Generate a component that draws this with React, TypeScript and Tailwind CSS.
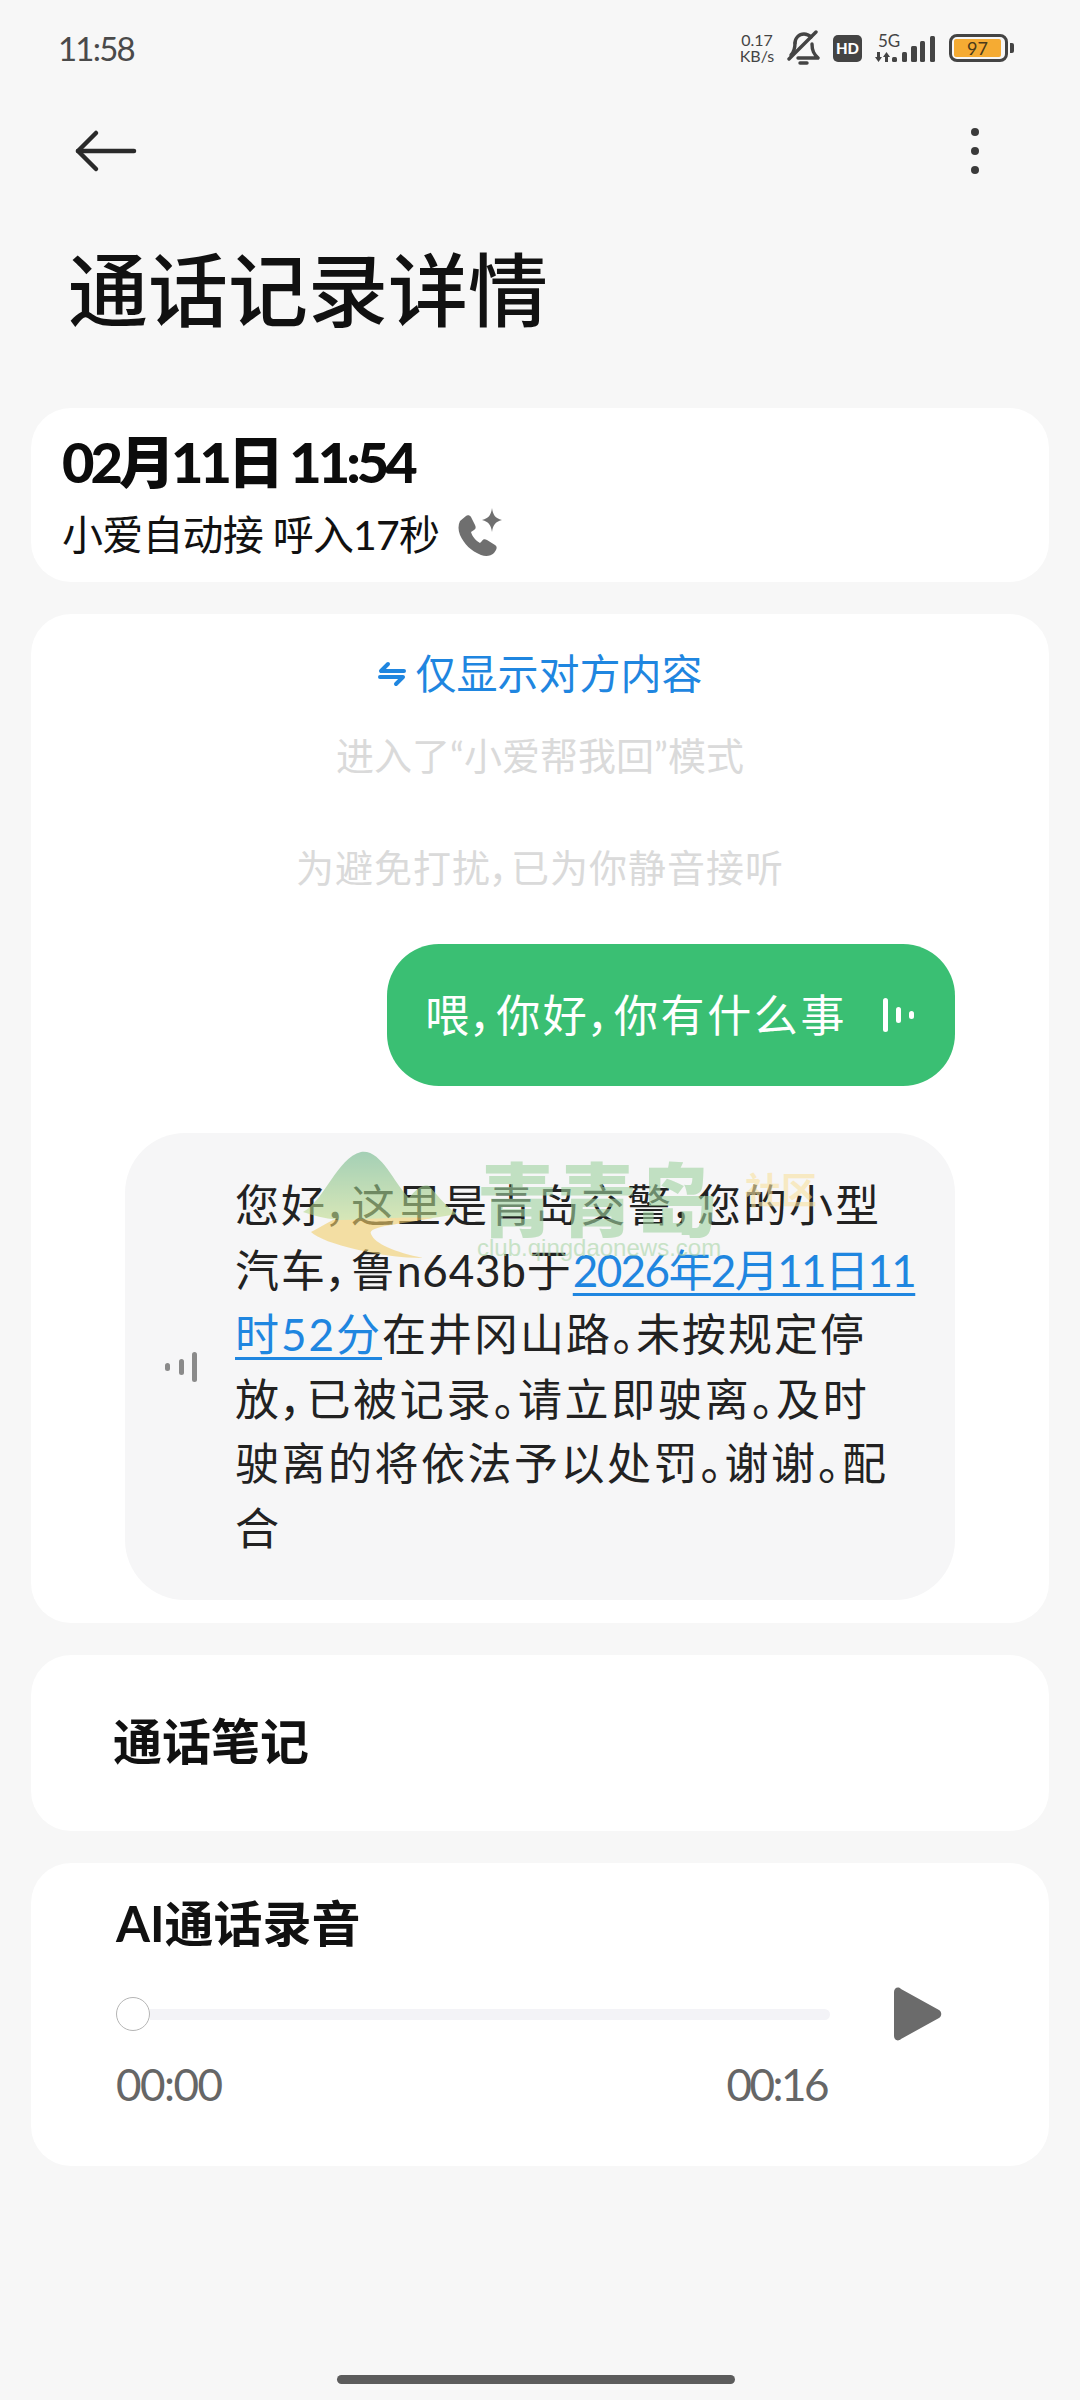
import React from 'react';

const cjk = "font-['Lato','Noto_Sans_CJK_SC',sans-serif] [font-feature-settings:'palt']";
const link = 'text-[#1f86e0] underline decoration-[3px] underline-offset-[6px]';

function StatusBar() {
  return (
    <div className="flex h-[96px] items-center justify-between pl-[58px] pr-[66px]">
      <span className="text-[33px] leading-none tracking-[-1.8px] text-[#4a4a4a]">11:58</span>
      <div className="flex items-center">
        <div className="flex w-[40px] flex-col items-center text-[16px] leading-[16px] text-[#444]">
          <span>0.17</span>
          <span>KB/s</span>
        </div>
        <svg className="ml-[9px]" width="34" height="36" viewBox="0 0 34 36" fill="none" stroke="#444" strokeWidth="3.4" strokeLinecap="round" strokeLinejoin="round">
          <path d="M9 13c0-5 4-9 9-9 3 0 5 1 7 3" />
          <path d="M26 14c0 7 2 10 6 14H12" />
          <path d="M9 13c0 5-1 9-4 12" />
          <path d="M3 29 30 2" />
          <path d="M14 33h7" />
        </svg>
        <div className="ml-[13px] flex h-[27px] w-[29px] items-center justify-center rounded-[5px] bg-[#444] text-[15px] font-black leading-none text-white">HD</div>
        <div className="relative ml-[12px] h-[32px] w-[62px]">
          <svg className="absolute left-0 top-0" width="62" height="32" viewBox="0 0 62 32" fill="#444">
            <path d="M3 20h3v5h2l-3.5 5L1 25h2Z" />
            <path d="M11 30h3v-5h2l-3.5-5L9 25h2Z" />
            <rect x="18" y="25" width="5" height="5" rx="1.5" />
            <rect x="28" y="20" width="5" height="10" rx="1.5" />
            <rect x="37" y="14" width="6" height="16" rx="1.5" />
            <rect x="46" y="9" width="5" height="21" rx="1.5" />
            <rect x="56" y="4" width="5" height="26" rx="1.5" />
          </svg>
          <span className="absolute left-[4px] top-[0px] text-[17px] leading-[17px] text-[#444]">5G</span>
        </div>
        <div className="ml-[13px] flex items-center">
          <div className="h-[28px] w-[59px] rounded-[8px] border-[3px] border-[#444] p-[2px]">
            <div className="flex h-full w-[47px] items-center justify-center rounded-[2px] bg-[#f5ab33] text-[18px] leading-none text-[#4a3a1a]">97</div>
          </div>
          <div className="ml-[2px] h-[10px] w-[4px] rounded-r-[2px] bg-[#444]" />
        </div>
      </div>
    </div>
  );
}

function Bars({ heights, gaps, color }: { heights: number[]; gaps: number[]; color: string }) {
  let x = 0;
  const h = Math.max(...heights);
  return (
    <svg width="34" height={h} viewBox={`0 0 34 ${h}`} fill={color}>
      {heights.map((b, i) => {
        const el = <rect key={i} x={x} y={(h - b) / 2} width="5" height={b} rx="2.5" />;
        x += gaps[i] || 0;
        return el;
      })}
    </svg>
  );
}

function Watermark() {
  return (
    <div className="pointer-events-none absolute left-[45px] top-[17px] h-[110px] w-[660px] opacity-60">
      <svg className="absolute left-[63px] top-0" width="300" height="110" viewBox="0 0 300 110">
        <defs>
          <linearGradient id="mt" x1="0" y1="0" x2="0" y2="1">
            <stop offset="0" stopColor="#6fb78a" />
            <stop offset="1" stopColor="#c5de8e" />
          </linearGradient>
        </defs>
        <path d="M70 62C92 50 104 8 128 2c20-3 32 30 48 46 8-10 14-14 20-12 6 6 14 18 28 28-40 8-110 14-154-2Z" fill="url(#mt)" />
        <path d="M100 70c30 0 70-4 100-2-30 6-66 8-62 16 4 10 24 18 52 24-40 0-100-14-112-26 8-4 14-8 22-12Z" fill="#f2cf6c" />
      </svg>
      <div className="absolute left-[307px] top-[10px] whitespace-nowrap font-['Noto_Sans_CJK_SC',sans-serif] text-[80px] font-black leading-[70px] text-[#9fd2a0]">青青岛</div>
      <div className="absolute left-[575px] top-[20px] whitespace-nowrap font-['Noto_Sans_CJK_SC',sans-serif] text-[36px] font-bold leading-none text-[#f8e2a0]">社区</div>
      <div className="absolute left-[307px] top-[86px] whitespace-nowrap font-['Liberation_Sans',sans-serif] text-[24px] leading-none text-[#a9d5a6]">club.qingdaonews.com</div>
    </div>
  );
}

export default function App() {
  return (
    <div className={`relative h-[2400px] w-[1080px] overflow-hidden bg-[#f7f7f7] ${cjk}`}>
      <StatusBar />

      {/* Header */}
      <div className="flex h-[108px] items-center justify-between pl-[74px] pr-[101px] pt-[2px]">
        <svg width="64" height="44" viewBox="0 0 64 44" fill="none" stroke="#2a2a2a" strokeWidth="4.5" strokeLinecap="round" strokeLinejoin="round">
          <path d="M60 22H4" />
          <path d="M22 4 4 22l18 18" />
        </svg>
        <div className="flex flex-col gap-[11px]">
          <span className="h-[8px] w-[8px] rounded-full bg-[#3a3a3a]" />
          <span className="h-[8px] w-[8px] rounded-full bg-[#3a3a3a]" />
          <span className="h-[8px] w-[8px] rounded-full bg-[#3a3a3a]" />
        </div>
      </div>
      <h1 className="ml-[68px] mt-[35px] text-[80px] font-medium leading-[100px] text-[#111]">通话记录详情</h1>

      <div className="mt-[69px] flex flex-col gap-[32px] px-[31px]">
        {/* Time card */}
        <div className="h-[174px] rounded-[40px] bg-white pl-[31px] pt-[21px]">
          <div className="text-[56px] font-black leading-[66px] tracking-[-4px] text-[#0c0c0c]">02月11日 11:54</div>
          <div className="mt-[12px] flex items-center">
            <span className="text-[41px] leading-[56px] tracking-[-0.8px] text-[#111]">小爱自动接 呼入17秒</span>
            <svg className="ml-[18px] -translate-y-[2px]" width="50" height="50" viewBox="0 0 50 50" fill="#6f6f6f">
              <path d="M3 13c-2 4-2 9 0 14 4 9 11 16 21 20 5 2 10 1 13-2l2-3c1-2 1-4-1-5l-8-5c-2-1-4-1-5 1l-2 2c-4-2-8-7-9-11l3-2c2-1 2-3 1-5l-4-8c-1-2-4-2-5-1Z" />
              <path d="M35 0c1 7 3 10 10 12-7 2-9 5-10 12-1-7-3-10-10-12 7-2 9-5 10-12Z" />
            </svg>
          </div>
        </div>

        {/* Transcript card */}
        <div className="flex h-[1009px] flex-col rounded-[40px] bg-white px-[94px]">
          <div className="mt-[36px] flex items-center justify-center text-[41px] leading-[48px] text-[#1f86e0]">
            <svg className="mr-[10px]" width="28" height="28" viewBox="0 0 28 28" fill="none" stroke="#1f86e0" strokeWidth="4" strokeLinecap="round" strokeLinejoin="round">
              <path d="M10 4 3 11h23" />
              <path d="M18 24l7-7H2" />
            </svg>
            仅显示对方内容
          </div>
          <div className="mt-[33px] text-center text-[38px] leading-[48px] text-[#dadada]">进入了“小爱帮我回”模式</div>
          <div className="mt-[64px] text-center text-[38px] leading-[48px] tracking-[1px] text-[#dadada]">为避免打扰，已为你静音接听</div>

          <div className="mt-[53px] flex h-[142px] w-[568px] items-center self-end rounded-[52px] bg-[#3abf73] pl-[38px]">
            <span className="whitespace-nowrap text-[44px] leading-none tracking-[2.6px] text-white">喂，你好，你有什么事</span>
            <div className="ml-[36px]">
              <Bars heights={[34, 16, 8]} gaps={[13, 13]} color="#ffffff" />
            </div>
          </div>

          <div className="relative mt-[47px] flex h-[467px] items-center rounded-[60px] bg-[#f6f6f7] pl-[40px]">
            <div className="w-[70px] shrink-0">
              <Bars heights={[8, 16, 30]} gaps={[14, 13]} color="#8a8a8a" />
            </div>
            <p className="whitespace-nowrap text-[44px] leading-[64.5px] tracking-[2px] text-[#222]">
              您好，这里是青岛交警，您的小型<br />
              汽车，鲁<span className="tracking-[0.8px]">n643b</span>于<span className={`${link} tracking-[-1.6px]`}>2026年2月11日11</span><br />
              <span className={link}>时52分</span>在井冈山路。未按规定停<br />
              <span className="tracking-[2.7px]">放，已被记录。请立即驶离。及时</span><br />
              <span className="tracking-[2.5px]">驶离的将依法予以处罚。谢谢。配</span><br />
              合
            </p>
            <Watermark />
          </div>
        </div>

        {/* Notes card */}
        <div className="flex h-[176px] items-center rounded-[40px] bg-white pb-[4px] pl-[82px]">
          <span className="text-[49px] font-bold leading-none text-[#111]">通话笔记</span>
        </div>

        {/* Recording card */}
        <div className="h-[303px] rounded-[40px] bg-white pl-[85px] pr-[64px] pt-[32px]">
          <div className="text-[49px] font-bold leading-[56px] text-[#111]">AI通话录音</div>
          <div className="mt-[36px] flex items-center">
            <div className="flex w-[714px] items-center">
              <span className="h-[34px] w-[34px] shrink-0 rounded-full border border-[#b5b5b5] bg-white" />
              <span className="h-[11px] flex-1 rounded-r-full bg-[#f3f3f7]" />
            </div>
            <svg className="ml-[64px]" width="48" height="54" viewBox="0 0 48 54" fill="#6b6b6b">
              <path d="M0 5c0-4 4-6 7-3l38 21c3 2 3 6 0 8L7 52c-3 3-7 1-7-3Z" />
            </svg>
          </div>
          <div className="mt-[15px] flex w-[711px] justify-between text-[44px] leading-[56px] tracking-[-1.5px] text-[#666]">
            <span>00:00</span>
            <span className="tracking-[-2.5px]">00:16</span>
          </div>
        </div>
      </div>

      {/* Home indicator */}
      <div className="absolute bottom-[16px] left-[337px] h-[9px] w-[398px] rounded-full bg-[#5c5c5c]" />
    </div>
  );
}
